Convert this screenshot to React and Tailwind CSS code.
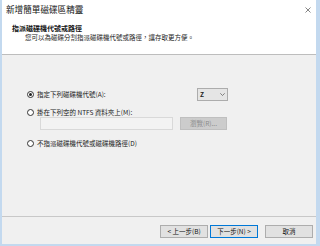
import React from "react";

function Radio({ checked }) {
  return (
    <span className="w-[7px] h-[7px] rounded-full border border-[#333] bg-white flex items-center justify-center shrink-0">
      {checked && <span className="w-[3px] h-[3px] rounded-full bg-[#222]" />}
    </span>
  );
}

function Btn({ children, primary, disabled, className = "" }) {
  return (
    <div
      className={
        "h-[13px] flex items-center justify-center text-[6.5px] leading-none border " +
        (disabled
          ? "bg-[#cccccc] border-[#bfbfbf] text-[#8a8a8a] "
          : primary
          ? "bg-[#e1e1e1] border-[#0078d7] text-[#111] "
          : "bg-[#e1e1e1] border-[#adadad] text-[#111] ") +
        className
      }
    >
      {children}
    </div>
  );
}

export default function App() {
  return (
    <div className="w-[320px] h-[246px] bg-[#f0f0f0] flex flex-col border-l-2 border-r-4 border-b-2 border-[#c3d9ef] font-['Noto_Sans_CJK_TC','Noto_Sans',sans-serif] text-[#1a1a1a] overflow-hidden">
      <div className="h-[55px] bg-white border-b border-[#bdbdbd] relative shrink-0">
        <div className="pl-[4px] pt-[4px] text-[8.6px] leading-[11px] text-[#111]">新增簡單磁碟區精靈</div>
        <div className="pl-[10px] pt-[9px] text-[7px] leading-[9px] font-bold text-[#111]">指派磁碟機代號或路徑</div>
        <div className="pl-[23px] pt-[0px] text-[6.5px] leading-[9px] text-[#222]">
          您可以為磁碟分割指派磁碟機代號或路徑，讓存取更方便。
        </div>
        <svg className="absolute top-[7px] right-[5px]" width="6" height="6" viewBox="0 0 6 6">
          <path d="M0.5 0.5 L5.5 5.5 M5.5 0.5 L0.5 5.5" stroke="#666" strokeWidth="0.8" fill="none" />
        </svg>
      </div>

      <div className="flex-1 flex flex-col pl-[25px] pt-[33px]">
        <div className="h-[13px] flex items-center">
          <div className="w-[170px] flex items-center gap-[3px]">
            <Radio checked />
            <span className="text-[6.5px] leading-none">指定下列磁碟機代號(A):</span>
          </div>
          <div className="w-[31px] h-[13px] bg-[#e5e5e5] border border-[#acacac] flex items-center justify-between pl-[2px] pr-[2px]">
            <span className="text-[6.5px] leading-none font-bold text-[#222]">Z</span>
            <svg width="5" height="3" viewBox="0 0 5 3">
              <path d="M0.3 0.3 L2.5 2.5 L4.7 0.3" stroke="#555" strokeWidth="0.7" fill="none" />
            </svg>
          </div>
        </div>
        <div className="h-[10px] mt-[6px] flex items-center gap-[3px]">
          <Radio />
          <span className="text-[6.5px] leading-none">掛在下列空的 NTFS 資料夾上(M):</span>
        </div>
        <div className="h-[13px] flex items-center pl-[13px] gap-[7px]">
          <div className="w-[133px] h-[13px] bg-[#f3f3f3] border border-[#d9d9d9]" />
          <Btn disabled className="w-[47px]">瀏覽(R)...</Btn>
        </div>
        <div className="h-[10px] mt-[8px] flex items-center gap-[3px]">
          <Radio />
          <span className="text-[6.5px] leading-none">不指派磁碟機代號或磁碟機路徑(D)</span>
        </div>
      </div>

      <div className="h-[28px] shrink-0 border-t border-[#c8c8c8] flex justify-end items-start pt-[8px] pr-[3px]">
        <Btn className="w-[48px]">&lt; 上一步(B)</Btn>
        <Btn primary className="w-[48px] ml-[2px]">下一步(N) &gt;</Btn>
        <Btn className="w-[48px] ml-[7px]">取消</Btn>
      </div>
    </div>
  );
}
